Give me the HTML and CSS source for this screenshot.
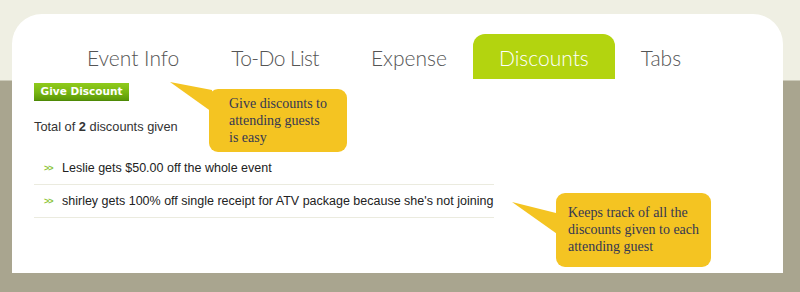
FILE: index.html
```html
<!DOCTYPE html>
<html>
<head>
<meta charset="utf-8">
<link rel="stylesheet" href="styles.css">
</head>
<body>
<div class="card">
  <nav class="tabs">
    <span class="tab">Event Info</span>
    <span class="tab tight">To-Do List</span>
    <span class="tab">Expense</span>
    <span class="tab active">Discounts</span>
    <span class="tab">Tabs</span>
  </nav>
  <div class="content">
    <button class="give-btn">Give Discount</button>
    <p class="total">Total of <b>2</b> discounts given</p>
    <ul class="list">
      <li><span class="arrows">&gt;&gt;</span>Leslie gets $50.00 off the whole event</li>
      <li><span class="arrows">&gt;&gt;</span>shirley gets 100% off single receipt for ATV package because she's not joining</li>
    </ul>
  </div>
  <div class="callout callout-one">
    <svg class="pointer" width="42" height="30" viewBox="0 0 42 30"><polygon points="0,0 42,8 42,30" fill="#f4c422"/></svg>
    Give discounts to<br>attending guests<br>is easy
  </div>
  <div class="callout callout-two">
    <svg class="pointer" width="48" height="34" viewBox="0 0 48 34"><polygon points="0,0 48,12 48,34" fill="#f4c422"/></svg>
    Keeps track of all the<br>discounts given to each<br>attending guest
  </div>
</div>
</body>
</html>
```

FILE: styles.css
```css
html, body {
  margin: 0;
  padding: 0;
}
body {
  width: 800px;
  height: 292px;
  overflow: hidden;
  background: linear-gradient(to bottom, #efefe3 0, #efefe3 80px, #a9a58f 81px, #a9a58f 100%);
  font-family: "Liberation Sans", Arial, sans-serif;
}
.card {
  position: relative;
  margin: 14px 0 0 12px;
  width: 771px;
  height: 259px;
  background: #fff;
  border-radius: 30px 30px 0 0;
  box-sizing: border-box;
  padding: 20px 0 0 0;
}
.tabs {
  display: flex;
  padding-left: 49px;
  height: 45px;
}
.tab {
  display: flex;
  align-items: center;
  padding: 2px 26px 0;
  font-family: "Lato", "Open Sans", sans-serif;
  font-weight: 300;
  font-size: 21px;
  color: #555;
}
.tab.tight {
  letter-spacing: -0.6px;
}
.tab.active {
  background: #b3d40f;
  color: #fff;
  border-radius: 12px 12px 0 0;
}
.content {
  padding: 4px 0 0 22px;
}
.give-btn {
  display: block;
  width: 95px;
  height: 18px;
  padding: 0;
  border: none;
  border-bottom: 1px solid #4e8a06;
  background: linear-gradient(to bottom, #8fcb1b 0%, #78b612 55%, #5b9807 100%);
  color: #fff;
  font-family: "DejaVu Sans", Verdana, sans-serif;
  font-weight: bold;
  font-size: 10.5px;
  text-align: center;
  line-height: 17px;
}
.total {
  margin: 18px 0 0 0;
  font-size: 12.8px;
  color: #333;
  line-height: 15px;
}
.total b {
  font-weight: bold;
}
.list {
  list-style: none;
  margin: 18px 0 0 0;
  padding: 0;
  width: 460px;
}
.list li {
  display: flex;
  align-items: center;
  height: 32px;
  border-bottom: 1px solid #ebebdf;
  font-size: 12.5px;
  color: #222;
  padding-left: 10px;
}
.arrows {
  color: #8cc43a;
  font-weight: bold;
  font-size: 9px;
  width: 18px;
  letter-spacing: -1px;
}
.callout {
  position: absolute;
  background: #f4c422;
  border-radius: 9px;
  font-family: "Liberation Serif", "Times New Roman", serif;
  font-size: 14px;
  line-height: 17px;
  color: #343752;
  box-sizing: border-box;
}
.pointer {
  position: absolute;
}
.callout-one {
  left: 197px;
  top: 75px;
  width: 138px;
  height: 63px;
  padding: 6px 0 0 20px;
}
.callout-one .pointer {
  left: -39px;
  top: -7px;
}
.callout-two {
  left: 544px;
  top: 179px;
  width: 155px;
  height: 74px;
  padding: 11px 0 0 12px;
}
.callout-two .pointer {
  left: -44px;
  top: 9px;
}
```
